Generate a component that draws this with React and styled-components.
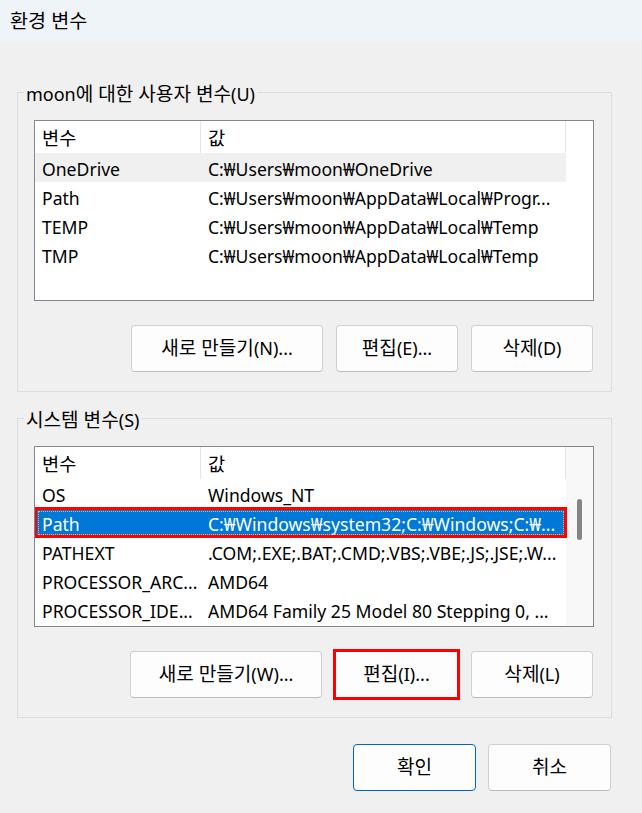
import React from 'react';
import styled, { createGlobalStyle } from 'styled-components';

const GlobalStyle = createGlobalStyle`
  html, body { margin: 0; padding: 0; background: #f0f0f0; }
  body {
    font-family: "Noto Sans", "Noto Sans CJK KR", sans-serif;
    font-size: 18px;
    color: #000;
  }
  * { box-sizing: border-box; }
`;

const Window = styled.div`
  width: 642px;
  height: 813px;
  background: #f0f0f0;
  display: flex;
  flex-direction: column;
  overflow: hidden;
`;

const TitleBar = styled.div`
  height: 42px;
  flex: none;
  background: #eff4f9;
  padding: 0 0 1px 10px;
  display: flex;
  align-items: center;
  font-size: 18.5px;
`;

const Hangul = styled.span`
  font-size: 1.06em;
  line-height: 1;
`;

function Txt({ children }) {
  const parts = String(children).split(/([가-힣]+(?:\s+[가-힣]+)*)/);
  return (
    <>
      {parts.map((p, i) =>
        p === '' ? null : /[가-힣]/.test(p) ? <Hangul key={i}>{p}</Hangul> : <React.Fragment key={i}>{p}</React.Fragment>
      )}
    </>
  );
}

const Body = styled.div`
  padding: 0 30px 0 17px;
  display: flex;
  flex-direction: column;
`;

const Group = styled.fieldset`
  margin: ${(p) => p.$top}px 0 0 0;
  padding: 0;
  border: 1px solid #dcdcdc;
  min-width: 0;
`;

const Legend = styled.legend`
  margin-left: 6px;
  padding: 3px 2px 0;
  line-height: 22px;
  height: 25px;
`;

const GroupInner = styled.div`
  padding: 15px 17px 19px 16px;
  display: flex;
  flex-direction: column;
`;

const ListBox = styled.div`
  height: 181px;
  border: 1px solid #82868e;
  background: #fff;
  display: flex;
  overflow: hidden;
`;

const ListMain = styled.div`
  flex: 1;
  min-width: 0;
  display: flex;
  flex-direction: column;
`;

const SideColumn = styled.div`
  width: 27px;
  flex: none;
  background: ${(p) => (p.$scroll ? '#f8f8f8' : '#fff')};
  display: flex;
  flex-direction: column;
  align-items: center;
`;

const Thumb = styled.div`
  margin-top: 52px;
  width: 5px;
  height: 41px;
  border-radius: 3px;
  background: #858585;
`;

const Row = styled.div`
  position: relative;
  display: grid;
  grid-template-columns: 166px 1fr;
  height: ${(p) => (p.$header ? 32 : 29)}px;
  flex: none;
  align-items: center;
  background: ${(p) => (p.$selected ? '#0078d7' : p.$hover ? '#f0f0f0' : '#fff')};
  color: ${(p) => (p.$selected ? '#fff' : '#000')};
  outline: ${(p) => (p.$marked ? '3px solid #ff0000' : 'none')};
  outline-offset: -2px;
  z-index: ${(p) => (p.$marked ? 1 : 0)};
  &::after {
    content: '';
    display: ${(p) => (p.$selected ? 'block' : 'none')};
    position: absolute;
    inset: 3px 2px 2px 3px;
    border: 1px dotted #f3b26b;
    pointer-events: none;
  }
`;

const Cell = styled.div`
  height: 100%;
  min-width: 0;
  display: flex;
  align-items: center;
  padding: 3px 0 0 7px;
  white-space: nowrap;
  font-size: 17.6px;
  border-right: ${(p) => (p.$divider ? '1px solid #e5e5e5' : 'none')};
`;

const ButtonRow = styled.div`
  margin-top: ${(p) => p.$top}px;
  display: flex;
  justify-content: flex-end;
  gap: ${(p) => p.$gap || 13}px;
  padding-right: ${(p) => p.$right || 0}px;
`;

const Button = styled.button`
  width: ${(p) => p.$w}px;
  height: 47px;
  flex: none;
  font-family: "Noto Sans", "Noto Sans CJK KR", sans-serif;
  font-size: 18px;
  color: #000;
  background: #fdfdfd;
  border: 1px solid ${(p) => (p.$default ? '#0067c0' : '#d0d0d0')};
  border-bottom-color: ${(p) => (p.$default ? '#0067c0' : '#bcbcbc')};
  border-radius: ${(p) => (p.$marked ? 0 : 4)}px;
  padding: 0 0 2px;
  outline: ${(p) => (p.$marked ? '3px solid #ff0000' : 'none')};
  outline-offset: -1px;
  white-space: nowrap;
`;

const userVars = [
  ['OneDrive', 'C:₩Users₩moon₩OneDrive'],
  ['Path', 'C:₩Users₩moon₩AppData₩Local₩Progr...'],
  ['TEMP', 'C:₩Users₩moon₩AppData₩Local₩Temp'],
  ['TMP', 'C:₩Users₩moon₩AppData₩Local₩Temp'],
];

const sysVars = [
  ['OS', 'Windows_NT'],
  ['Path', 'C:₩Windows₩system32;C:₩Windows;C:₩...'],
  ['PATHEXT', '.COM;.EXE;.BAT;.CMD;.VBS;.VBE;.JS;.JSE;.W...'],
  ['PROCESSOR_ARC...', 'AMD64'],
  ['PROCESSOR_IDE...', 'AMD64 Family 25 Model 80 Stepping 0, ...'],
];

function VarList({ rows, hoverIndex, selectedIndex, scroll }) {
  return (
    <ListBox>
      <ListMain>
        <Row $header>
          <Cell $divider><Txt>변수</Txt></Cell>
          <Cell $divider><Txt>값</Txt></Cell>
        </Row>
        {rows.map(([k, v], i) => (
          <Row
            key={k + i}
            $hover={i === hoverIndex}
            $selected={i === selectedIndex}
            $marked={i === selectedIndex}
          >
            <Cell>{k}</Cell>
            <Cell>{v}</Cell>
          </Row>
        ))}
      </ListMain>
      <SideColumn $scroll={scroll}>{scroll && <Thumb />}</SideColumn>
    </ListBox>
  );
}

export default function App() {
  return (
    <Window>
      <GlobalStyle />
      <TitleBar><Txt>환경 변수</Txt></TitleBar>
      <Body>
        <Group $top={38}>
          <Legend><Txt>moon에 대한 사용자 변수(U)</Txt></Legend>
          <GroupInner>
            <VarList rows={userVars} hoverIndex={0} />
            <ButtonRow $top={24} $right={1}>
              <Button $w={192}><Txt>새로 만들기(N)...</Txt></Button>
              <Button $w={122}><Txt>편집(E)...</Txt></Button>
              <Button $w={122}><Txt>삭제(D)</Txt></Button>
            </ButtonRow>
          </GroupInner>
        </Group>
        <Group $top={14}>
          <Legend><Txt>시스템 변수(S)</Txt></Legend>
          <GroupInner>
            <VarList rows={sysVars} selectedIndex={1} scroll />
            <ButtonRow $top={24} $right={1}>
              <Button $w={192}><Txt>새로 만들기(W)...</Txt></Button>
              <Button $w={123} $marked><Txt>편집(I)...</Txt></Button>
              <Button $w={122}><Txt>삭제(L)</Txt></Button>
            </ButtonRow>
          </GroupInner>
        </Group>
        <ButtonRow $top={26} $right={1} $gap={12}>
          <Button $w={123} $default><Txt>확인</Txt></Button>
          <Button $w={123}><Txt>취소</Txt></Button>
        </ButtonRow>
      </Body>
    </Window>
  );
}
